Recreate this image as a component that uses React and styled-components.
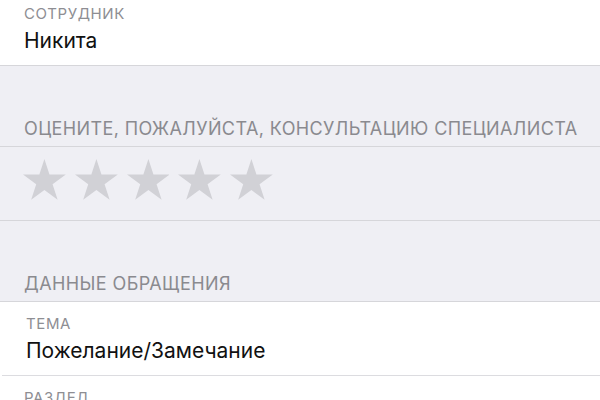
import React from "react";
import styled, { createGlobalStyle } from "styled-components";

const GlobalStyle = createGlobalStyle`
  html, body {
    margin: 0;
    padding: 0;
    background: #efeff4;
    font-family: Inter, "Liberation Sans", sans-serif;
    -webkit-font-smoothing: antialiased;
  }
`;

const Page = styled.div`
  width: 600px;
  height: 400px;
  overflow: hidden;
  background: #efeff4;
`;

const Group = styled.div`
  background: #ffffff;
  border-bottom: 1px solid #d6d6da;
`;

const SectionHeader = styled.div`
  padding: 52px 0 7px 24px;
  font-size: 18px;
  line-height: 21px;
  letter-spacing: 0.4px;
  color: #8a8a8f;
  text-transform: uppercase;
  white-space: nowrap;
  border-bottom: 1px solid #d6d6da;
`;

const Cell = styled.div`
  padding: ${(p) => (p.$first ? "5px" : "13px")} 0 12px 24px;
  display: flex;
  flex-direction: column;
  gap: 5px;
  border-bottom: ${(p) => (p.$separator ? "1px solid #dcdce0" : "none")};
  margin-left: ${(p) => (p.$separator ? "2px" : "0")};
`;

const Label = styled.div`
  font-size: 15px;
  line-height: 18px;
  letter-spacing: 0.6px;
  color: #8e8e93;
  text-transform: uppercase;
`;

const Value = styled.div`
  font-size: 21px;
  line-height: 25px;
  color: #111111;
`;

const StarsRow = styled.div`
  height: 74px;
  box-sizing: border-box;
  display: flex;
  align-items: flex-start;
  gap: 9px;
  padding: 12px 0 0 23px;
  border-bottom: 1px solid #d6d6da;
`;

// five-pointed star, outer radius r, inner ratio 0.382
const starPoints = (r) => {
  const cx = r * Math.sin((72 * Math.PI) / 180);
  const cy = r;
  const pts = [];
  for (let i = 0; i < 10; i++) {
    const rad = i % 2 === 0 ? r : r * 0.382;
    const a = (-90 + i * 36) * (Math.PI / 180);
    pts.push(`${(cx + rad * Math.cos(a)).toFixed(2)},${(cy + rad * Math.sin(a)).toFixed(2)}`);
  }
  return pts.join(" ");
};

const Star = ({ r = 22.5 }) => {
  const w = 2 * r * Math.sin((72 * Math.PI) / 180);
  const h = r * (1 + Math.cos((36 * Math.PI) / 180));
  return (
    <svg width={w} height={h} viewBox={`0 0 ${w} ${h}`}>
      <polygon points={starPoints(r)} fill="#d1d1d6" />
    </svg>
  );
};

function App() {
  return (
    <Page>
      <GlobalStyle />
      <Group>
        <Cell $first>
          <Label>Сотрудник</Label>
          <Value>Никита</Value>
        </Cell>
      </Group>
      <SectionHeader>Оцените, пожалуйста, консультацию специалиста</SectionHeader>
      <StarsRow>
        {[0, 1, 2, 3, 4].map((i) => (
          <Star key={i} />
        ))}
      </StarsRow>
      <SectionHeader>Данные обращения</SectionHeader>
      <Group>
        <Cell $separator>
          <Label>Тема</Label>
          <Value>Пожелание/Замечание</Value>
        </Cell>
        <Cell>
          <Label>Раздел</Label>
        </Cell>
      </Group>
    </Page>
  );
}

export default App;
